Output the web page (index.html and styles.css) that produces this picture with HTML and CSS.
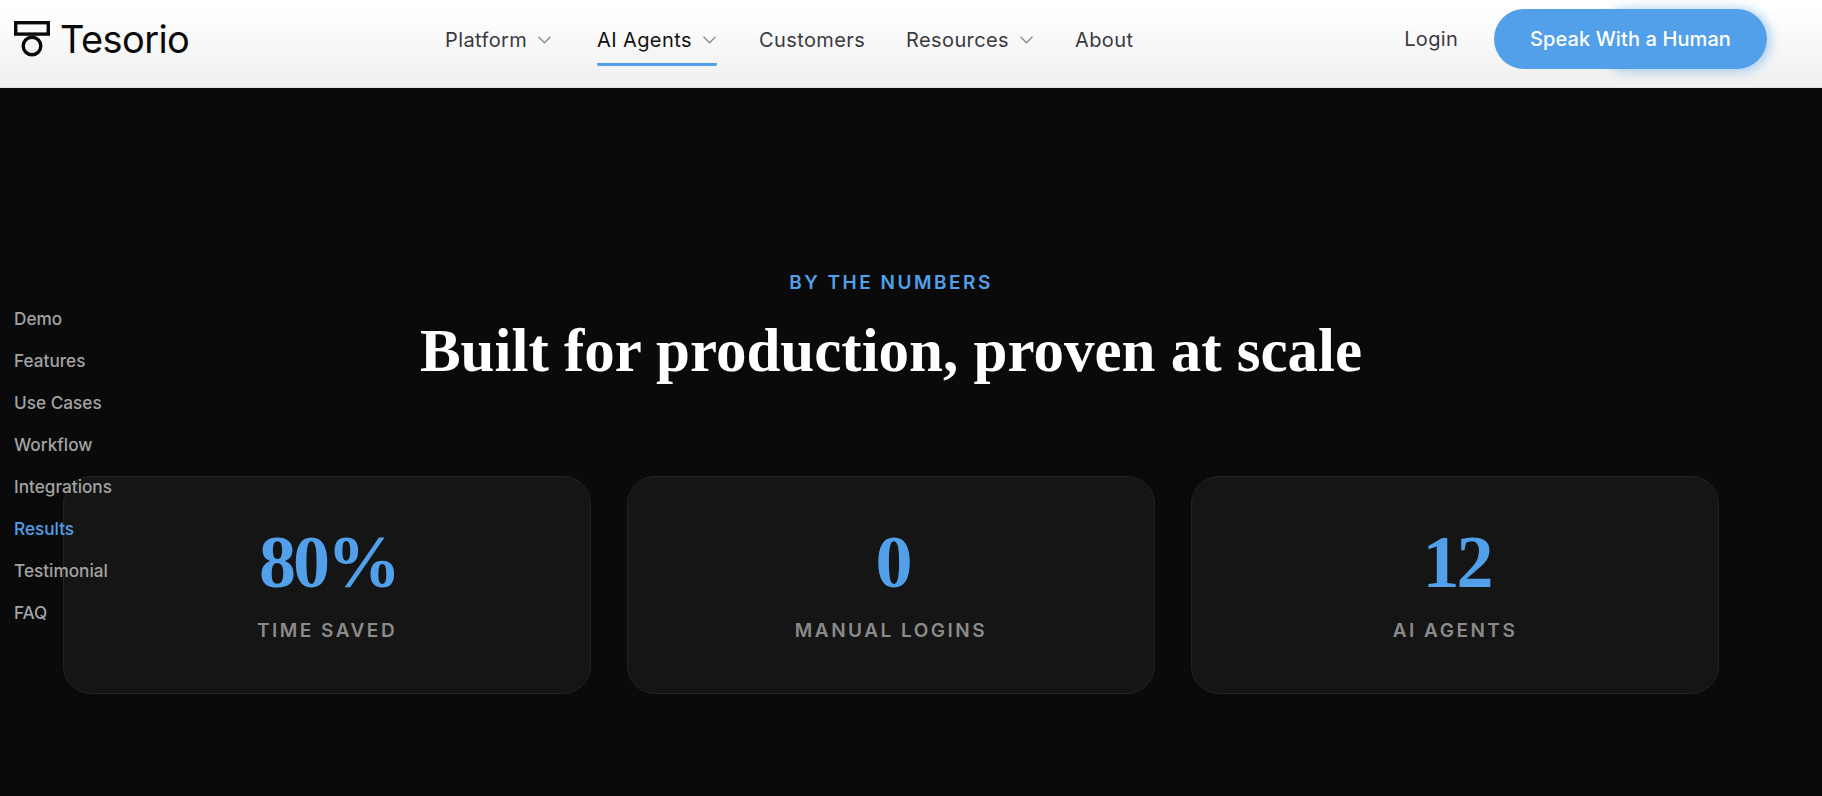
FILE: index.html
```html
<!DOCTYPE html>
<html lang="en">

<head>
    <meta charset="UTF-8">
    <meta name="viewport" content="width=device-width, initial-scale=1.0">
    <title>Tesorio</title>
    <link rel="stylesheet" href="styles.css">
</head>

<body>
    <header class="header">
        <a class="logo" href="#">
            <svg class="logo-icon" viewBox="0 0 36 36" fill="none" stroke="#0a0a0a" stroke-width="3.4">
                <rect x="1.7" y="1.7" width="32.6" height="11.4"></rect>
                <circle cx="18" cy="25" r="8.8"></circle>
            </svg>
            <span class="logo-text">Tesorio</span>
        </a>
        <nav class="nav">
            <a class="nav-item nav-platform" href="#">Platform
                <svg class="chevron" viewBox="0 0 12 7"><path d="M.5.5 6 6 11.5.5"></path></svg>
            </a>
            <a class="nav-item nav-agents active" href="#">AI Agents
                <svg class="chevron" viewBox="0 0 12 7"><path d="M.5.5 6 6 11.5.5"></path></svg>
            </a>
            <a class="nav-item nav-customers" href="#">Customers</a>
            <a class="nav-item nav-resources" href="#">Resources
                <svg class="chevron" viewBox="0 0 12 7"><path d="M.5.5 6 6 11.5.5"></path></svg>
            </a>
            <a class="nav-item nav-about" href="#">About</a>
        </nav>
        <div class="header-right">
            <a class="login" href="#">Login</a>
            <a class="btn-human" href="#">Speak With a Human</a>
        </div>
    </header>

    <aside class="side-nav">
        <a href="#">Demo</a>
        <a href="#">Features</a>
        <a href="#">Use Cases</a>
        <a href="#">Workflow</a>
        <a href="#">Integrations</a>
        <a href="#" class="current">Results</a>
        <a href="#">Testimonial</a>
        <a href="#">FAQ</a>
    </aside>

    <main class="numbers">
        <p class="eyebrow">BY THE NUMBERS</p>
        <h1 class="title">Built for production, proven at scale</h1>
        <section class="cards">
            <div class="card">
                <div class="card-value">80%</div>
                <div class="card-label">TIME SAVED</div>
            </div>
            <div class="card">
                <div class="card-value">0</div>
                <div class="card-label">MANUAL LOGINS</div>
            </div>
            <div class="card">
                <div class="card-value">12</div>
                <div class="card-label">AI AGENTS</div>
            </div>
        </section>
    </main>
</body>

</html>
```

FILE: styles.css
```css
* {
    box-sizing: border-box;
}

body {
    margin: 0;
    height: 796px;
    overflow: hidden;
    background: #0a0a0a;
    font-family: "Inter", "Liberation Sans", sans-serif;
}

a {
    text-decoration: none;
    color: inherit;
}

.header {
    height: 88px;
    display: flex;
    align-items: center;
    padding: 0 55px 9px 14px;
    background: linear-gradient(#ffffff 10%, #efefef 100%);
    border-bottom: 1px solid #e4e4e4;
    isolation: isolate;
}

.logo {
    display: flex;
    align-items: center;
    gap: 10px;
    width: 431px;
}

.logo-icon {
    width: 36px;
    height: 36px;
}

.logo-text {
    font-size: 38px;
    font-weight: 400;
    letter-spacing: -0.6px;
    color: #0a0a0a;
}

.nav {
    display: flex;
    flex: 1;
    align-self: flex-start;
}

.nav-item {
    display: flex;
    align-items: center;
    gap: 11px;
    height: 66px;
    padding-top: 16px;
    font-size: 20px;
    letter-spacing: 0.4px;
    color: #3a3a3f;
    border-bottom: 3px solid transparent;
}

.nav-platform { width: 152px; }
.nav-agents { width: 120px; margin-right: 42px; }
.nav-customers { width: 147px; }
.nav-resources { width: 169px; }

.nav-item.active {
    color: #111;
    border-bottom-color: #52a0ea;
    border-radius: 0 0 2px 2px;
}

.chevron {
    width: 13px;
    height: 8px;
    fill: none;
    stroke: #8a8a8f;
    stroke-width: 1.2;
}

.header-right {
    display: flex;
    align-items: center;
    gap: 36px;
}

.login {
    font-size: 20px;
    letter-spacing: 0.3px;
    color: #3a3a3f;
}

.btn-human {
    position: relative;
    display: flex;
    align-items: center;
    justify-content: center;
    width: 273px;
    height: 60px;
    border-radius: 30px;
    background: #52a0ea;
    color: #fff;
    font-size: 20px;
    font-weight: 500;
    letter-spacing: 0.1px;
}

/* glow only sits on the right side of the button */
.btn-human::before {
    content: "";
    position: absolute;
    top: 0;
    right: 0;
    bottom: 0;
    width: 170px;
    border-radius: 30px;
    box-shadow: 2px 1px 8px 3px rgba(82, 160, 234, .38);
    z-index: -1;
}

.side-nav {
    position: absolute;
    top: 307px;
    left: 14px;
    z-index: 2;
    display: flex;
    flex-direction: column;
    gap: 18px;
    font-size: 17.2px;
    line-height: 24px;
    font-weight: 500;
    color: #a3a3a3;
}

.side-nav .current {
    color: #52a0ea;
}

.numbers {
    padding: 183px 103px 0 63px;
    text-align: center;
}

.eyebrow {
    margin: 0;
    font-size: 19px;
    line-height: 24px;
    font-weight: 600;
    letter-spacing: 2.5px;
    color: #52a0ea;
}

.title {
    margin: 18px 0 0;
    font-family: "Liberation Serif", serif;
    font-size: 61px;
    line-height: 76px;
    font-weight: 700;
    color: #fff;
}

.cards {
    display: grid;
    grid-template-columns: repeat(3, 1fr);
    gap: 36px;
    margin-top: 87px;
}

.card {
    height: 218px;
    padding-top: 41px;
    background: #151515;
    border: 1px solid #232323;
    border-radius: 28px;
}

.card-value {
    padding-left: 3px;
    font-family: "Liberation Serif", serif;
    font-size: 74px;
    line-height: 88px;
    font-weight: 700;
    letter-spacing: -3px;
    color: #52a0ea;
}

.card-label {
    margin-top: 13px;
    font-size: 19px;
    line-height: 24px;
    font-weight: 600;
    letter-spacing: 2.5px;
    color: #8a8a8a;
}
```
